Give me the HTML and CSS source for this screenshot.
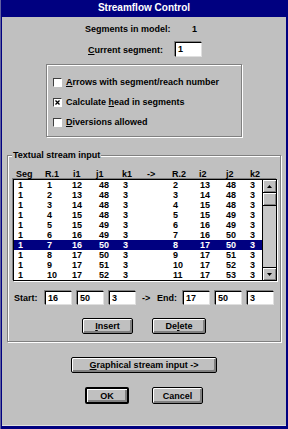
FILE: index.html
```html
<!DOCTYPE html>
<html>
<head>
<meta charset="utf-8">
<link rel="stylesheet" href="styles.css">
</head>
<body>
<div class="window">
  <div class="titlebar">Streamflow Control</div>
  <div class="client">
    <div class="row-seg"><span class="lbl-seg">Segments in model:</span><span>1</span></div>
    <div class="row-cur"><span class="lbl-cur"><u>C</u>urrent segment:</span><span class="field cur-field">1</span></div>
    <div class="optgroup">
      <div class="check"><span class="box"></span><span><u>A</u>rrows with segment/reach number</span></div>
      <div class="check"><span class="box"><svg width="5" height="5" viewBox="0 0 5 5"><path d="M0.5 0.5L4.5 4.5M4.5 0.5L0.5 4.5" stroke="#000" stroke-width="1.3"/></svg></span><span>Calculate <u>h</u>ead in segments</span></div>
      <div class="check"><span class="box"></span><span><u>D</u>iversions allowed</span></div>
    </div>
    <fieldset class="textual">
      <legend>Textual stream input</legend>
      <div class="hdr"><span>Seg</span><span>R.1</span><span>i1</span><span>j1</span><span>k1</span><span>-&gt;</span><span>R.2</span><span>i2</span><span>j2</span><span>k2</span></div>
      <div class="list">
        <div class="rows">
          <div class="row"><span>1</span><span>1</span><span>12</span><span>48</span><span>3</span><span>2</span><span>13</span><span>48</span><span>3</span></div>
          <div class="row"><span>1</span><span>2</span><span>13</span><span>48</span><span>3</span><span>3</span><span>14</span><span>48</span><span>3</span></div>
          <div class="row"><span>1</span><span>3</span><span>14</span><span>48</span><span>3</span><span>4</span><span>15</span><span>48</span><span>3</span></div>
          <div class="row"><span>1</span><span>4</span><span>15</span><span>48</span><span>3</span><span>5</span><span>15</span><span>49</span><span>3</span></div>
          <div class="row"><span>1</span><span>5</span><span>15</span><span>49</span><span>3</span><span>6</span><span>16</span><span>49</span><span>3</span></div>
          <div class="row"><span>1</span><span>6</span><span>16</span><span>49</span><span>3</span><span>7</span><span>16</span><span>50</span><span>3</span></div>
          <div class="row sel"><span>1</span><span>7</span><span>16</span><span>50</span><span>3</span><span>8</span><span>17</span><span>50</span><span>3</span></div>
          <div class="row"><span>1</span><span>8</span><span>17</span><span>50</span><span>3</span><span>9</span><span>17</span><span>51</span><span>3</span></div>
          <div class="row"><span>1</span><span>9</span><span>17</span><span>51</span><span>3</span><span>10</span><span>17</span><span>52</span><span>3</span></div>
          <div class="row"><span>1</span><span>10</span><span>17</span><span>52</span><span>3</span><span>11</span><span>17</span><span>53</span><span>3</span></div>
        </div>
        <div class="scroll">
          <div class="sb-btn up"><svg width="5" height="3" viewBox="0 0 5 3"><path d="M0 3H5L2.5 0Z" fill="#000"/></svg></div>
          <div class="thumb"></div>
          <div class="track"></div>
          <div class="sb-btn down"><svg width="5" height="3" viewBox="0 0 5 3"><path d="M0 0H5L2.5 3Z" fill="#000"/></svg></div>
        </div>
      </div>
      <div class="coords">
        <span class="lbl-start">Start:</span>
        <span class="field cin">16</span>
        <span class="field cin">50</span>
        <span class="field cin">3</span>
        <span class="arrow">-&gt;</span>
        <span class="lbl-end">End:</span>
        <span class="field cin">17</span>
        <span class="field cin">50</span>
        <span class="field cin">3</span>
      </div>
      <div class="btnrow">
        <div class="btn b-insert"><u>I</u>nsert</div>
        <div class="btn b-delete">De<u>l</u>ete</div>
      </div>
    </fieldset>
    <div class="btnrow2"><div class="btn b-graph"><u>G</u>raphical stream input -&gt;</div></div>
    <div class="btnrow3">
      <div class="btn b-ok">OK</div>
      <div class="btn b-cancel">Cancel</div>
    </div>
  </div>
</div>
</body>
</html>
```
FILE: styles.css
```css
body {
  margin: 0;
  background: #000080;
  font-family: "Liberation Sans", Arial, sans-serif;
  font-size: 9px;
  font-weight: bold;
  color: #000;
}
u { text-underline-offset: 1px; }
.window {
  width: 288px;
  height: 429px;
  box-sizing: border-box;
  padding: 0 2px 3px 2px;
  background: #000080;
  display: flex;
  flex-direction: column;
  box-shadow: inset 1px 0 0 #6060a0;
}
.titlebar {
  flex: none;
  height: 17px;
  line-height: 16px;
  color: #fff;
  text-align: center;
  font-size: 10px;
}
.client {
  flex: 1;
  background: #c0c0c0;
  display: flex;
  flex-direction: column;
  border-bottom: 1px solid #e0e0e0;
}
.row-seg {
  margin-top: 7px;
  padding-left: 83px;
  display: flex;
  line-height: 10px;
}
.lbl-seg { width: 107px; }
.row-cur {
  margin-top: 8px;
  padding-left: 86px;
  height: 15px;
  display: flex;
  align-items: center;
}
.lbl-cur { width: 87px; }
.field {
  background: #fff;
  box-sizing: border-box;
  border: 1px solid;
  border-color: #000 #dfdfdf #dfdfdf #000;
  box-shadow: -1px -1px 0 #808080;
  padding-left: 2px;
}
.cur-field {
  width: 27px;
  height: 15px;
  line-height: 13px;
}
.optgroup {
  margin: 7px auto 0;
  width: 196px;
  height: 73px;
  box-sizing: border-box;
  border: 1px solid #808080;
  box-shadow: 1px 1px 0 #fff, inset 1px 1px 0 #fff;
  padding: 11px 0 0 6px;
  display: flex;
  flex-direction: column;
  gap: 8px;
}
.check {
  height: 12px;
  display: flex;
  align-items: center;
  line-height: 12px;
}
.box {
  width: 9px;
  height: 9px;
  box-sizing: border-box;
  background: #fff;
  border: 1px solid;
  border-color: #404040 #fff #fff #404040;
  margin-right: 4px;
  display: flex;
  align-items: center;
  justify-content: center;
}
.textual {
  margin: 13px 5px 0;
  padding: 0 0 7px;
  border: 1px solid #808080;
  box-shadow: 1px 1px 0 #fff, inset 1px 1px 0 #fff;
  min-width: 0;
}
.textual legend {
  margin-left: 4px;
  padding: 0 1px;
  line-height: 10px;
  background: #c0c0c0;
}
.hdr {
  display: grid;
  grid-template-columns: 29px 28px 23px 26px 25px 25px 27px 27px 24px 1fr;
  margin: 10px 0 0 8px;
  line-height: 9px;
  height: 9px;
}
.list {
  margin-left: 5px;
  width: 264px;
  height: 102px;
  box-sizing: border-box;
  border: 1px solid #000;
  box-shadow: -1px -1px 0 #808080, 1px 1px 0 #fff;
  background: #fff;
  display: flex;
}
.rows { flex: 1; }
.row {
  display: grid;
  grid-template-columns: 29px 25px 27px 24px 50px 27px 26px 24px 1fr;
  padding-left: 4px;
  height: 10px;
  line-height: 10px;
}
.row.sel {
  background: #000080;
  color: #fff;
}
.scroll {
  width: 14px;
  box-sizing: border-box;
  border-left: 1px solid #000;
  background: #c0c0c0;
  display: flex;
  flex-direction: column;
}
.sb-btn, .thumb {
  height: 13px;
  box-sizing: border-box;
  background: #c0c0c0;
  box-shadow: inset 1px 1px 0 #fff, inset -1px -1px 0 #808080;
  display: flex;
  align-items: center;
  justify-content: center;
}
.up, .thumb { border-bottom: 1px solid #000; }
.down { border-top: 1px solid #000; }
.track { flex: 1; background: #c8c8c8; }
.coords {
  display: flex;
  align-items: center;
  margin: 10px 0 0 6px;
  height: 14px;
}
.lbl-start { width: 31px; }
.cin {
  width: 27px;
  height: 14px;
  line-height: 12px;
  margin-right: 5px;
}
.arrow {
  margin-left: 1px;
  width: 15px;
}
.lbl-end { width: 26px; }
.btn {
  box-sizing: border-box;
  height: 16px;
  border: 1px solid #000;
  border-radius: 2px;
  background: #c0c0c0;
  box-shadow: inset 1px 1px 0 #fff, inset -2px -2px 0 #808080;
  display: flex;
  align-items: center;
  justify-content: center;
  line-height: 12px;
}
.btnrow {
  margin-top: 13px;
  display: flex;
  justify-content: center;
  gap: 19px;
}
.b-insert { width: 51px; }
.b-delete { width: 54px; }
.btnrow2 {
  margin-top: 15px;
  display: flex;
  justify-content: center;
}
.b-graph { width: 146px; }
.btnrow3 {
  margin-top: 14px;
  display: flex;
  justify-content: center;
  gap: 23px;
}
.b-ok {
  width: 44px;
  height: 17px;
  border-width: 2px;
}
.b-cancel {
  width: 51px;
  height: 17px;
}
```
